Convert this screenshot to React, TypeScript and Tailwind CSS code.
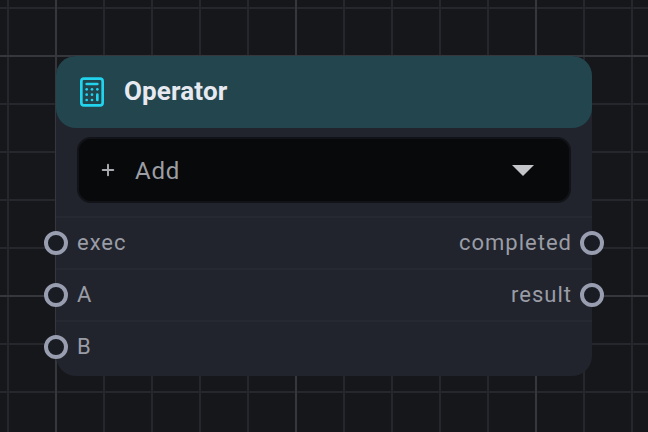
import React from "react";
import { Calculator, Plus } from "lucide-react";

const Socket = ({ side }: { side: "left" | "right" }) => (
  <span
    className={`absolute top-[13px] w-6 h-6 rounded-full border-4 border-[#989db0] bg-[#191c23] ${
      side === "left" ? "-left-3" : "-right-3"
    }`}
  />
);

const rows = [
  { left: "exec", right: "completed" },
  { left: "A", right: "result" },
  { left: "B", right: "" },
];

const App = () => {
  return (
    <div className="w-[648px] h-[432px] overflow-hidden pl-14 pt-14 bg-[#16171b] bg-[image:linear-gradient(#36373c_2px,transparent_2px),linear-gradient(90deg,#36373c_2px,transparent_2px),linear-gradient(#26272c_2px,transparent_2px),linear-gradient(90deg,#26272c_2px,transparent_2px)] bg-[size:240px_240px,240px_240px,48px_48px,48px_48px] bg-[position:0_55px,55px_0,0_7px,7px_0] font-['Roboto',sans-serif]">
      <div className="w-[536px] h-[320px] rounded-[20px] bg-[#21242c] flex flex-col">
        <div className="h-[72px] shrink-0 rounded-[20px] bg-[#22454e] flex items-center pl-[20px] gap-[16px]">
          <Calculator size={32} color="#22d3ee" strokeWidth={2} />
          <span className="text-[26px] tracking-[0.15px] font-bold text-[#e6eaf0] leading-none -mt-[2px]">Operator</span>
        </div>
        <div className="mx-[21px] mt-[9px] h-[66px] rounded-[14px] bg-[#08090b] border-2 border-[#121318] flex items-center pl-[20px] pr-[35px]">
          <Plus size={18} color="#a8aaaf" strokeWidth={2.6} />
          <span className="ml-[18px] mt-[2px] text-[24px] tracking-[0.8px] text-[#9c9ea3] leading-none">Add</span>
          <span className="ml-auto w-0 h-0 border-x-[11px] border-x-transparent border-t-[11px] border-t-[#c3c5c9]" />
        </div>
        <div className="mt-[13px] flex flex-col">
          {rows.map((row) => (
            <div
              key={row.left}
              className="relative h-[52px] border-t-2 border-[#262932] flex items-center justify-between pl-[21px] pr-[20px] text-[22px] tracking-[1px] text-[#9a9ca6] leading-none"
            >
              <Socket side="left" />
              <span>{row.left}</span>
              <span>{row.right}</span>
              {row.right && <Socket side="right" />}
            </div>
          ))}
        </div>
      </div>
    </div>
  );
};

export default App;
